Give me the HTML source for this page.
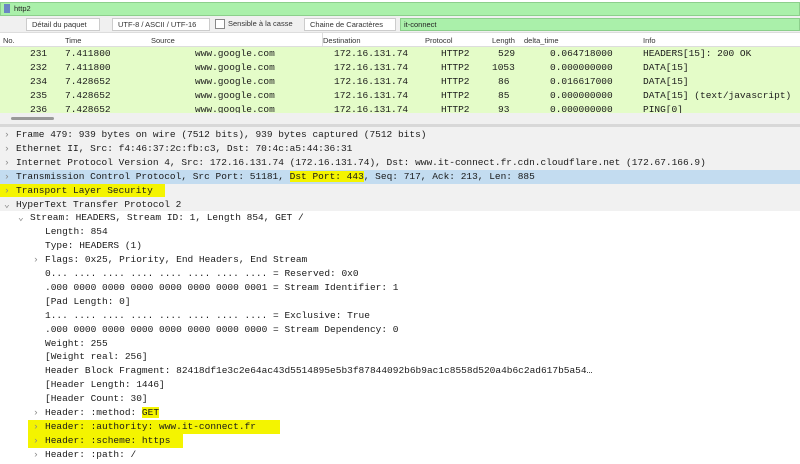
<!DOCTYPE html>
<html><head><meta charset="utf-8"><style>
*{margin:0;padding:0;box-sizing:border-box}
body{width:800px;height:464px;overflow:hidden;background:#fff;font-family:"Liberation Sans",sans-serif;position:relative}
.abs{position:absolute}
.mono{font-family:"Liberation Mono",monospace;font-size:9.5px;color:#1a1a1a}
.filter{left:0;top:2px;width:800px;height:14px;background:#aaf0aa;border:1px solid #8ccf8c}
.tb{left:0;top:16px;width:800px;height:17px;background:#f0f0f0;border-bottom:1px solid #ddd}
.sel{top:2px;height:13px;background:#fff;border:1px solid #ccc;font-size:7.5px;color:#333;padding:1px 5px;line-height:10px}
.hdr{left:0;top:33px;width:800px;height:14px;background:#fff;border-bottom:1px solid #ddd;font-size:7.5px;color:#333}
.hdr span{position:absolute;top:3px}
.plist{left:0;top:47px;width:800px;height:70px;background:#e4fcc8}
.prow{position:absolute;left:0;width:800px;height:14px;line-height:14px}
.prow span{position:absolute}
.tree{left:0;top:128px;width:800px}
.tr{position:absolute;left:0;width:800px;height:13.9px;line-height:13.9px;white-space:pre}
.tr span{position:absolute}
.y{background:#f4f400}
.arr{color:#888}
</style></head><body>
<div class="abs filter"><div class="abs" style="left:3px;top:1px;width:6px;height:9px;background:#6b86c4"></div><div class="abs" style="left:13px;top:0px;font-size:7.5px;line-height:12px;color:#222">http2</div></div>
<div class="abs tb">
<div class="abs sel" style="left:26px;width:74px">Détail du paquet &nbsp;⌄</div>
<div class="abs sel" style="left:112px;width:98px">UTF-8 / ASCII / UTF-16 &nbsp;⌄</div>
<div class="abs" style="left:215px;top:3px;width:10px;height:10px;border:1px solid #888;background:#fff"></div>
<div class="abs" style="left:228px;top:3px;font-size:7.5px;color:#333">Sensible à la casse</div>
<div class="abs sel" style="left:304px;width:92px">Chaine de Caractères &nbsp;⌄</div>
<div class="abs" style="left:400px;top:2px;width:400px;height:13px;background:#aaf0aa;border:1px solid #8ccf8c;font-size:7.5px;color:#222;padding:1px 3px;line-height:10px">it-connect</div>
</div>
<div class="abs hdr"><span style="left:3px">No.</span><span style="left:65px">Time</span><span style="left:151px">Source</span><span style="left:323px">Destination</span><span style="left:425px">Protocol</span><span style="left:492px">Length</span><span style="left:524px">delta_time</span><span style="left:643px">Info</span>
<div class="abs" style="left:322px;top:0;width:1px;height:14px;background:#ddd"></div></div>
<div class="abs plist mono">
<div class="prow" style="top:0"><span style="left:30px">231</span><span style="left:65px">7.411800</span><span style="left:195px">www.google.com</span><span style="left:334px">172.16.131.74</span><span style="left:441px">HTTP2</span><span style="left:498px">529</span><span style="left:550px">0.064718000</span><span style="left:643px">HEADERS[15]: 200 OK</span></div>
<div class="prow" style="top:14px"><span style="left:30px">232</span><span style="left:65px">7.411800</span><span style="left:195px">www.google.com</span><span style="left:334px">172.16.131.74</span><span style="left:441px">HTTP2</span><span style="left:492px">1053</span><span style="left:550px">0.000000000</span><span style="left:643px">DATA[15]</span></div>
<div class="prow" style="top:28px"><span style="left:30px">234</span><span style="left:65px">7.428652</span><span style="left:195px">www.google.com</span><span style="left:334px">172.16.131.74</span><span style="left:441px">HTTP2</span><span style="left:498px">86</span><span style="left:550px">0.016617000</span><span style="left:643px">DATA[15]</span></div>
<div class="prow" style="top:42px"><span style="left:30px">235</span><span style="left:65px">7.428652</span><span style="left:195px">www.google.com</span><span style="left:334px">172.16.131.74</span><span style="left:441px">HTTP2</span><span style="left:498px">85</span><span style="left:550px">0.000000000</span><span style="left:643px">DATA[15] (text/javascript)</span></div>
<div class="prow" style="top:56px;height:10px;overflow:hidden"><span style="left:30px">236</span><span style="left:65px">7.428652</span><span style="left:195px">www.google.com</span><span style="left:334px">172.16.131.74</span><span style="left:441px">HTTP2</span><span style="left:498px">93</span><span style="left:550px">0.000000000</span><span style="left:643px">PING[0]</span></div>
</div>
<div class="abs" style="left:0;top:113px;width:800px;height:11px;background:#f0f0f0"></div>
<div class="abs" style="left:11px;top:117px;width:43px;height:3px;background:#999;border-radius:2px"></div>
<div class="abs" style="left:0;top:124px;width:800px;height:3px;background:#d8d8d8"></div>
<div class="abs" style="left:0;top:127px;width:800px;height:84px;background:#f1f1f1"></div>
<div class="abs" style="left:0;top:169.7px;width:800px;height:13.9px;background:#c3dcf0"></div>
<div class="abs tree mono">
<div class="tr" style="top:0"><span class="arr" style="left:4px">›</span><span style="left:16px">Frame 479: 939 bytes on wire (7512 bits), 939 bytes captured (7512 bits)</span></div>
<div class="tr" style="top:13.9px"><span class="arr" style="left:4px">›</span><span style="left:16px">Ethernet II, Src: f4:46:37:2c:fb:c3, Dst: 70:4c:a5:44:36:31</span></div>
<div class="tr" style="top:27.8px"><span class="arr" style="left:4px">›</span><span style="left:16px">Internet Protocol Version 4, Src: 172.16.131.74 (172.16.131.74), Dst: www.it-connect.fr.cdn.cloudflare.net (172.67.166.9)</span></div>
<div class="tr" style="top:41.7px"><span class="arr" style="left:4px">›</span><span style="left:16px">Transmission Control Protocol, Src Port: 51181, <b class="y" style="font-weight:normal">Dst Port: 443</b>, Seq: 717, Ack: 213, Len: 885</span></div>
<div class="tr" style="top:55.6px"><span class="y" style="left:0;width:165px;height:13.9px"></span><span class="arr" style="left:4px">›</span><span style="left:16px">Transport Layer Security</span></div>
<div class="tr" style="top:69.5px"><span class="arr" style="left:4px">⌄</span><span style="left:16px">HyperText Transfer Protocol 2</span></div>
<div class="tr" style="top:83.4px"><span class="arr" style="left:18px">⌄</span><span style="left:30px">Stream: HEADERS, Stream ID: 1, Length 854, GET /</span></div>
<div class="tr" style="top:97.3px"><span style="left:45px">Length: 854</span></div>
<div class="tr" style="top:111.2px"><span style="left:45px">Type: HEADERS (1)</span></div>
<div class="tr" style="top:125.1px"><span class="arr" style="left:33px">›</span><span style="left:45px">Flags: 0x25, Priority, End Headers, End Stream</span></div>
<div class="tr" style="top:139px"><span style="left:45px">0... .... .... .... .... .... .... .... = Reserved: 0x0</span></div>
<div class="tr" style="top:152.9px"><span style="left:45px">.000 0000 0000 0000 0000 0000 0000 0001 = Stream Identifier: 1</span></div>
<div class="tr" style="top:166.8px"><span style="left:45px">[Pad Length: 0]</span></div>
<div class="tr" style="top:180.7px"><span style="left:45px">1... .... .... .... .... .... .... .... = Exclusive: True</span></div>
<div class="tr" style="top:194.6px"><span style="left:45px">.000 0000 0000 0000 0000 0000 0000 0000 = Stream Dependency: 0</span></div>
<div class="tr" style="top:208.5px"><span style="left:45px">Weight: 255</span></div>
<div class="tr" style="top:222.4px"><span style="left:45px">[Weight real: 256]</span></div>
<div class="tr" style="top:236.3px"><span style="left:45px">Header Block Fragment: 82418df1e3c2e64ac43d5514895e5b3f87844092b6b9ac1c8558d520a4b6c2ad617b5a54…</span></div>
<div class="tr" style="top:250.2px"><span style="left:45px">[Header Length: 1446]</span></div>
<div class="tr" style="top:264.1px"><span style="left:45px">[Header Count: 30]</span></div>
<div class="tr" style="top:278px"><span class="arr" style="left:33px">›</span><span style="left:45px">Header: :method: <b class="y" style="font-weight:normal">GET</b></span></div>
<div class="tr" style="top:291.9px"><span class="y" style="left:28px;width:252px;height:13.9px"></span><span class="arr" style="left:33px">›</span><span style="left:45px">Header: :authority: www.it-connect.fr</span></div>
<div class="tr" style="top:305.8px"><span class="y" style="left:28px;width:155px;height:13.9px"></span><span class="arr" style="left:33px">›</span><span style="left:45px">Header: :scheme: https</span></div>
<div class="tr" style="top:319.7px"><span class="arr" style="left:33px">›</span><span style="left:45px">Header: :path: /</span></div>
</div>
</body></html>
